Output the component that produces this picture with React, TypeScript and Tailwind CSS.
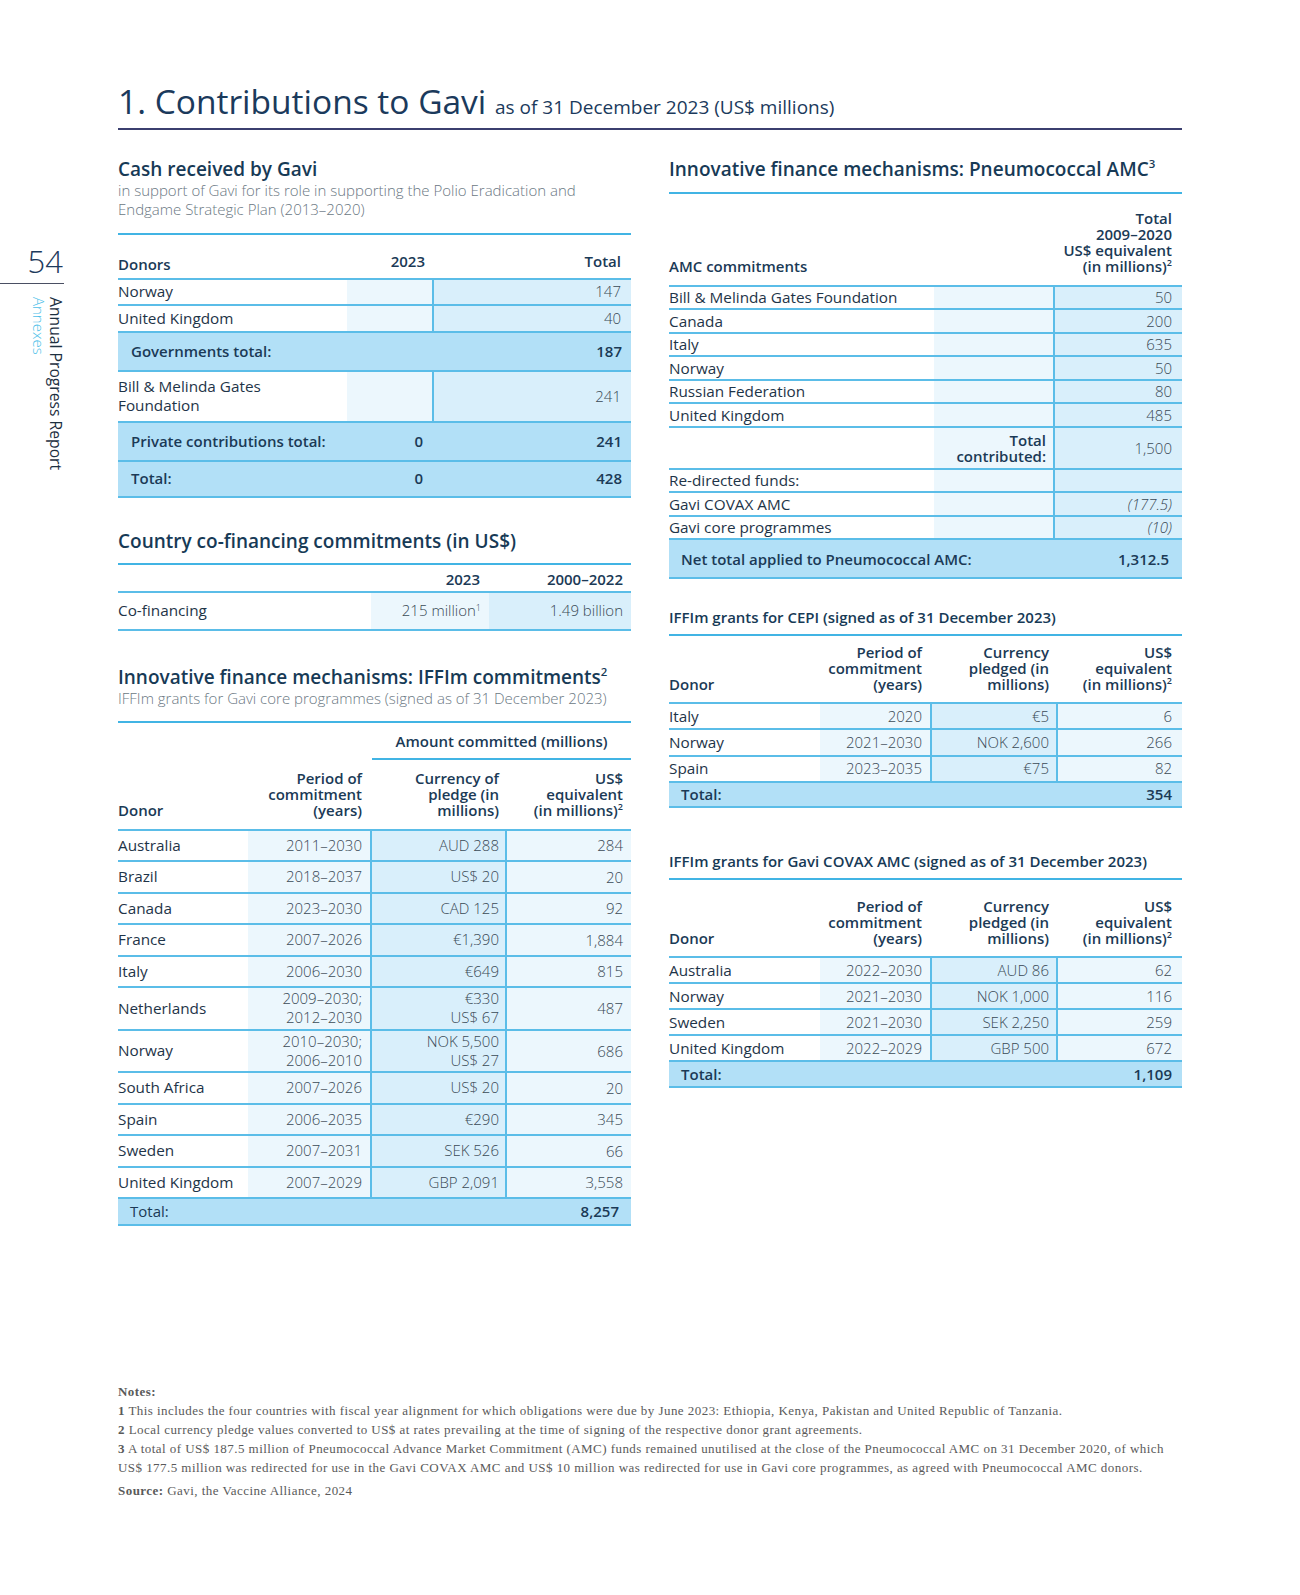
import React from "react";

const B = "border-[#5bbde8]";
const LBL = "text-[15.3px] text-[#1e3448]";
const VAL = "text-[15px] font-light text-[#3a4a56]";
const HD = "text-[15px] leading-[16px] font-semibold text-[#1b3a56]";
const BG1 = "bg-[#ecf7fd]";
const BG2 = "bg-[#d9effb]";
const BGT = "bg-[#b2e0f7]";
const RULE = "h-[2px] bg-[#41b4e4]";

type V = string | string[];
function L({ v }: { v: V }) {
  if (Array.isArray(v)) {
    return (
      <>
        {v[0]}
        <br />
        {v[1]}
      </>
    );
  }
  return <>{v}</>;
}

function Sup({ n }: { n: string }) {
  return <sup className="text-[0.6em] top-[-0.65em]">{n}</sup>;
}

function CashTable() {
  return (
    <div className="flex flex-col">
      <div className={`flex h-[45px] border-b-2 ${B} items-end`}>
        <div className={`w-[229px] pb-[4px] ${HD} leading-[20px]`}>Donors</div>
        <div className={`w-[87px] pb-[7px] pr-[9px] text-right ${HD} leading-[20px]`}>2023</div>
        <div className={`w-[197px] pb-[7px] pr-[10px] text-right ${HD} leading-[20px]`}>Total</div>
      </div>
      {[
        ["Norway", "147", "h-[26px]"],
        ["United Kingdom", "40", "h-[27px]"],
      ].map(([d, t, h]) => (
        <div key={d} className={`flex ${h} border-b-2 ${B}`}>
          <div className={`w-[229px] flex items-center ${LBL}`}>{d}</div>
          <div className={`w-[87px] ${BG1} border-r-2 ${B}`} />
          <div className={`w-[197px] flex items-center justify-end pr-[10px] ${BG2} ${VAL}`}>{t}</div>
        </div>
      ))}
      <div className={`flex h-[39px] border-b-2 ${B} ${BGT} items-center justify-between`}>
        <div className="pl-[13px] text-[15px] font-semibold text-[#1b3a56]">Governments total:</div>
        <div className="pr-[9px] text-[15px] font-semibold text-[#1b3a56]">187</div>
      </div>
      <div className={`flex h-[51px] border-b-2 ${B}`}>
        <div className={`w-[229px] flex items-center ${LBL} leading-[19px]`}>
          Bill &amp; Melinda Gates
          <br />
          Foundation
        </div>
        <div className={`w-[87px] ${BG1} border-r-2 ${B}`} />
        <div className={`w-[197px] flex items-center justify-end pr-[10px] ${BG2} ${VAL}`}>241</div>
      </div>
      <div className={`flex h-[39px] border-b-2 ${B} ${BGT} items-center`}>
        <div className="w-[229px] pl-[13px] text-[15px] font-semibold text-[#1b3a56]">Private contributions total:</div>
        <div className="w-[87px] pr-[11px] text-right text-[15px] font-semibold text-[#1b3a56]">0</div>
        <div className="w-[197px] pr-[9px] text-right text-[15px] font-semibold text-[#1b3a56]">241</div>
      </div>
      <div className={`flex h-[36px] border-b-2 ${B} ${BGT} items-center`}>
        <div className="w-[229px] pl-[13px] text-[15px] font-semibold text-[#1b3a56]">Total:</div>
        <div className="w-[87px] pr-[11px] text-right text-[15px] font-semibold text-[#1b3a56]">0</div>
        <div className="w-[197px] pr-[9px] text-right text-[15px] font-semibold text-[#1b3a56]">428</div>
      </div>
    </div>
  );
}

function CoFinTable() {
  return (
    <div className="flex flex-col">
      <div className={`flex h-[28px] border-b-2 ${B} items-end`}>
        <div className="w-[253px]" />
        <div className={`w-[118px] pb-[2px] pr-[9px] text-right ${HD} leading-[20px]`}>2023</div>
        <div className={`w-[142px] pb-[2px] pr-[8px] text-right ${HD} leading-[20px]`}>2000–2022</div>
      </div>
      <div className={`flex h-[38px] border-b-2 ${B}`}>
        <div className={`w-[253px] flex items-center ${LBL}`}>Co-financing</div>
        <div className={`w-[118px] flex items-center justify-end pr-[8px] ${BG1} ${VAL}`}>
          <span>
            215 million
            <Sup n="1" />
          </span>
        </div>
        <div className={`w-[142px] flex items-center justify-end pr-[8px] ${BG2} ${VAL}`}>1.49 billion</div>
      </div>
    </div>
  );
}

const iffim: [string, V, V, string][] = [
  ["Australia", "2011–2030", "AUD 288", "284"],
  ["Brazil", "2018–2037", "US$ 20", "20"],
  ["Canada", "2023–2030", "CAD 125", "92"],
  ["France", "2007–2026", "€1,390", "1,884"],
  ["Italy", "2006–2030", "€649", "815"],
  ["Netherlands", ["2009–2030;", "2012–2030"], ["€330", "US$ 67"], "487"],
  ["Norway", ["2010–2030;", "2006–2010"], ["NOK 5,500", "US$ 27"], "686"],
  ["South Africa", "2007–2026", "US$ 20", "20"],
  ["Spain", "2006–2035", "€290", "345"],
  ["Sweden", "2007–2031", "SEK 526", "66"],
  ["United Kingdom", "2007–2029", "GBP 2,091", "3,558"],
];

function IffimTable() {
  return (
    <div className="flex flex-col">
      <div className="h-[35px] flex">
        <div className="w-[254px]" />
        <div className={`w-[259px] pt-[8px] text-center text-[15px] leading-[20px] font-semibold text-[#1b3a56]`}>
          Amount committed (millions)
        </div>
      </div>
      <div className="flex">
        <div className="w-[254px]" />
        <div className={`w-[259px] ${RULE}`} />
      </div>
      <div className={`flex h-[71px] border-b-2 ${B} items-end pb-[11px]`}>
        <div className={`w-[130px] ${HD}`}>Donor</div>
        <div className={`w-[124px] pr-[10px] text-right ${HD}`}>
          Period of
          <br />
          commitment
          <br />
          (years)
        </div>
        <div className={`w-[135px] pr-[8px] text-right ${HD}`}>
          Currency of
          <br />
          pledge (in
          <br />
          millions)
        </div>
        <div className={`w-[124px] pr-[8px] text-right ${HD}`}>
          US$
          <br />
          equivalent
          <br />
          (in millions)
          <Sup n="2" />
        </div>
      </div>
      {iffim.map(([d, p, c, u]) => {
        const dbl = Array.isArray(p);
        return (
          <div key={d} className={`flex ${dbl ? "h-[42.5px]" : "h-[31.5px]"} border-b-2 ${B}`}>
            <div className={`w-[130px] flex items-center ${LBL}`}>{d}</div>
            <div
              className={`w-[124px] flex items-center justify-end pr-[8px] text-right leading-[19px] ${BG1} border-r-2 ${B} ${VAL}`}
            >
              <div>
                <L v={p} />
              </div>
            </div>
            <div
              className={`w-[135px] flex items-center justify-end pr-[6px] text-right leading-[19px] ${BG2} border-r-2 ${B} ${VAL}`}
            >
              <div>
                <L v={c} />
              </div>
            </div>
            <div className={`w-[124px] flex items-center justify-end pr-[8px] ${BG1} ${VAL}`}>{u}</div>
          </div>
        );
      })}
      <div className={`flex h-[27px] border-b-2 ${B} ${BGT} items-center justify-between`}>
        <div className="pl-[12px] text-[15px] text-[#1b3a56]">Total:</div>
        <div className="pr-[12px] text-[15px] font-semibold text-[#1b3a56]">8,257</div>
      </div>
    </div>
  );
}

const amc: [string, string][] = [
  ["Bill & Melinda Gates Foundation", "50"],
  ["Canada", "200"],
  ["Italy", "635"],
  ["Norway", "50"],
  ["Russian Federation", "80"],
  ["United Kingdom", "485"],
];

function AmcRow({ label, mid, val, h }: { label?: React.ReactNode; mid?: React.ReactNode; val?: React.ReactNode; h: string }) {
  return (
    <div className={`flex ${h} border-b-2 ${B}`}>
      <div className={`w-[265px] flex items-center ${LBL}`}>{label}</div>
      <div
        className={`w-[121px] flex items-center justify-end pr-[7px] text-right ${BG1} border-r-2 ${B} text-[15px] leading-[16px] font-semibold text-[#1b3a56]`}
      >
        {mid}
      </div>
      <div className={`w-[127px] flex items-center justify-end pr-[10px] ${BG2} ${VAL}`}>{val}</div>
    </div>
  );
}

function AmcTable() {
  return (
    <div className="flex flex-col">
      <div className={`flex h-[93px] border-b-2 ${B} items-end pb-[11px]`}>
        <div className={`w-[386px] ${HD}`}>AMC commitments</div>
        <div className={`w-[127px] pr-[10px] text-right ${HD}`}>
          Total
          <br />
          2009–2020
          <br />
          US$ equivalent
          <br />
          (in millions)
          <Sup n="2" />
        </div>
      </div>
      {amc.map(([l, v]) => (
        <AmcRow key={l} label={l} val={v} h="h-[23.5px]" />
      ))}
      <AmcRow
        h="h-[42px]"
        mid={
          <div>
            Total
            <br />
            contributed:
          </div>
        }
        val="1,500"
      />
      <AmcRow h="h-[23.5px]" label="Re-directed funds:" />
      <AmcRow h="h-[23.5px]" label="Gavi COVAX AMC" val={<span className="italic">(177.5)</span>} />
      <AmcRow h="h-[23.5px]" label="Gavi core programmes" val={<span className="italic">(10)</span>} />
      <div className={`flex h-[39px] border-b-2 ${B} ${BGT} items-center justify-between`}>
        <div className="pl-[12px] text-[15px] font-semibold text-[#1b3a56]">Net total applied to Pneumococcal AMC:</div>
        <div className="pr-[13px] text-[15px] font-semibold text-[#1b3a56]">1,312.5</div>
      </div>
    </div>
  );
}

function GrantTable({
  rows,
  total,
  headH,
  headPb,
  rowH,
  totH,
}: {
  rows: [string, string, string, string][];
  total: string;
  headH: string;
  headPb: string;
  rowH: string;
  totH: string;
}) {
  return (
    <div className="flex flex-col">
      <div className={`flex ${headH} border-b-2 ${B} items-end ${headPb}`}>
        <div className={`w-[151px] ${HD}`}>Donor</div>
        <div className={`w-[112px] pr-[10px] text-right ${HD}`}>
          Period of
          <br />
          commitment
          <br />
          (years)
        </div>
        <div className={`w-[126px] pr-[9px] text-right ${HD}`}>
          Currency
          <br />
          pledged (in
          <br />
          millions)
        </div>
        <div className={`w-[124px] pr-[10px] text-right ${HD}`}>
          US$
          <br />
          equivalent
          <br />
          (in millions)
          <Sup n="2" />
        </div>
      </div>
      {rows.map(([d, p, c, u]) => (
        <div key={d} className={`flex ${rowH} border-b-2 ${B}`}>
          <div className={`w-[151px] flex items-center ${LBL}`}>{d}</div>
          <div className={`w-[112px] flex items-center justify-end pr-[8px] ${BG1} border-r-2 ${B} ${VAL}`}>{p}</div>
          <div className={`w-[126px] flex items-center justify-end pr-[7px] ${BG2} border-r-2 ${B} ${VAL}`}>{c}</div>
          <div className={`w-[124px] flex items-center justify-end pr-[10px] ${BG1} ${VAL}`}>{u}</div>
        </div>
      ))}
      <div className={`flex ${totH} border-b-2 ${B} ${BGT} items-center justify-between`}>
        <div className="pl-[12px] text-[15px] font-semibold text-[#1b3a56]">Total:</div>
        <div className="pr-[10px] text-[15px] font-semibold text-[#1b3a56]">{total}</div>
      </div>
    </div>
  );
}

const H2 = "text-[19px] leading-[24px] font-semibold text-[#173a56] whitespace-nowrap";
const SUB = "text-[15px] leading-[19px] font-light text-[#6b7883] whitespace-nowrap";
const H3 = "text-[15px] leading-[20px] font-semibold text-[#173a56] whitespace-nowrap";

export default function App() {
  return (
    <div className="w-[1300px] h-[1595px] bg-white flex" style={{ fontFamily: '"Open Sans", "Noto Sans", sans-serif' }}>
      <aside className="w-[118px] shrink-0">
        <div className="w-[64px] pt-[245px] flex flex-col">
          <div className="text-[31px] leading-[32px] font-light text-right pr-[1px] text-[#1d3a5c]">54</div>
          <div className="mt-[6px] h-[1px] bg-[#4a4f63]" />
          <div className="mt-[13px] flex justify-end">
            <div className="[writing-mode:vertical-rl] text-[15px] leading-[17px]">
              <div className="text-[15.7px] text-[#1d2f3f]">Annual Progress Report</div>
              <div className="text-[#4fbfe9] font-light">Annexes</div>
            </div>
          </div>
        </div>
      </aside>
      <main className="w-[1064px] pt-[81px] flex flex-col">
        <div className="h-[40px] leading-[40px] text-[33.5px] whitespace-nowrap text-[#1b3a5c]">
          <span>1. Contributions to Gavi</span> <span className="text-[19px] leading-none">as of 31 December 2023 (US$ millions)</span>
        </div>
        <div className="mt-[7px] h-[2px] bg-[#3b3f6f]" />
        <div className="flex gap-[38px] items-start">
          <div className="w-[513px] flex flex-col">
            <div className={`mt-[26.6px] ${H2}`}>Cash received by Gavi</div>
            <div className={SUB}>
              in support of Gavi for its role in supporting the Polio Eradication and
              <br />
              Endgame Strategic Plan (2013–2020)
            </div>
            <div className={`mt-[14px] ${RULE}`} />
            <CashTable />

            <div className={`mt-[31px] ${H2}`}>Country co-financing commitments (in US$)</div>
            <div className={`mt-[10px] ${RULE}`} />
            <CoFinTable />

            <div className={`mt-[34px] ${H2}`}>
              Innovative finance mechanisms: IFFIm commitments
              <Sup n="2" />
            </div>
            <div className={SUB}>IFFIm grants for Gavi core programmes (signed as of 31 December 2023)</div>
            <div className={`mt-[13px] ${RULE}`} />
            <IffimTable />
          </div>

          <div className="w-[513px] flex flex-col">
            <div className={`mt-[26.6px] ${H2}`}>
              Innovative finance mechanisms: Pneumococcal AMC
              <Sup n="3" />
            </div>
            <div className={`mt-[11.4px] ${RULE}`} />
            <AmcTable />

            <div className={`mt-[28px] ${H3}`}>IFFIm grants for CEPI (signed as of 31 December 2023)</div>
            <div className={`mt-[6.5px] ${RULE}`} />
            <GrantTable
              headH="h-[68px]"
              headPb="pb-[10px]"
              rowH="h-[26.3px]"
              totH="h-[25.6px]"
              total="354"
              rows={[
                ["Italy", "2020", "€5", "6"],
                ["Norway", "2021–2030", "NOK 2,600", "266"],
                ["Spain", "2023–2035", "€75", "82"],
              ]}
            />

            <div className={`mt-[43px] ${H3}`}>IFFIm grants for Gavi COVAX AMC (signed as of 31 December 2023)</div>
            <div className={`mt-[6.5px] ${RULE}`} />
            <GrantTable
              headH="h-[78px]"
              headPb="pb-[10px]"
              rowH="h-[26px]"
              totH="h-[26px]"
              total="1,109"
              rows={[
                ["Australia", "2022–2030", "AUD 86", "62"],
                ["Norway", "2021–2030", "NOK 1,000", "116"],
                ["Sweden", "2021–2030", "SEK 2,250", "259"],
                ["United Kingdom", "2022–2029", "GBP 500", "672"],
              ]}
            />
          </div>
        </div>

        <div
          className="mt-[156px] text-[13px] leading-[19px] tracking-[0.45px] text-[#5a5a5a] whitespace-nowrap"
          style={{ fontFamily: '"Liberation Serif", "DejaVu Serif", serif' }}
        >
          <div className="font-bold">Notes:</div>
          <div>
            <span className="font-bold">1</span> This includes the four countries with fiscal year alignment for which obligations were due by June 2023: Ethiopia, Kenya, Pakistan and United Republic of Tanzania.
          </div>
          <div>
            <span className="font-bold">2</span> Local currency pledge values converted to US$ at rates prevailing at the time of signing of the respective donor grant agreements.
          </div>
          <div>
            <span className="font-bold">3</span> A total of US$ 187.5 million of Pneumococcal Advance Market Commitment (AMC) funds remained unutilised at the close of the Pneumococcal AMC on 31 December 2020, of which
          </div>
          <div>
            US$ 177.5 million was redirected for use in the Gavi COVAX AMC and US$ 10 million was redirected for use in Gavi core programmes, as agreed with Pneumococcal AMC donors.
          </div>
          <div className="mt-[4px]">
            <span className="font-bold">Source:</span> Gavi, the Vaccine Alliance, 2024
          </div>
        </div>
      </main>
    </div>
  );
}
